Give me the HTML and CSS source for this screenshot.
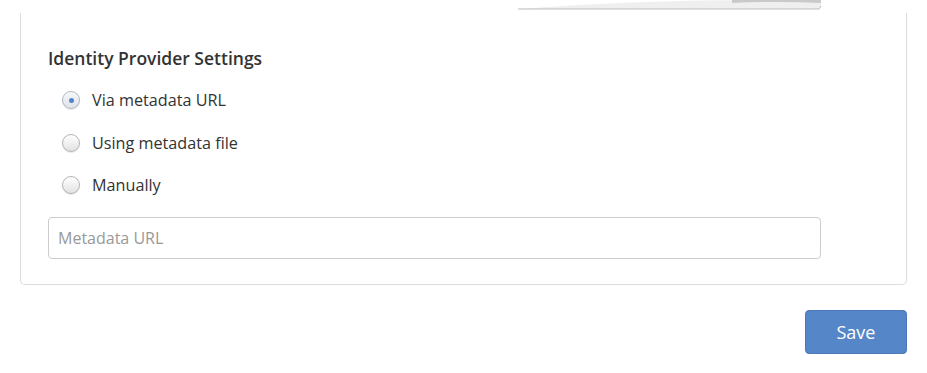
FILE: index.html
```html
<!DOCTYPE html>
<html>
<head>
<meta charset="utf-8">
<link rel="stylesheet" href="styles.css">
</head>
<body>
<div class="page">
  <svg class="strip" width="310" height="10" viewBox="0 0 310 10">
    <path d="M0 9 Q 120 0 240 0 L 303 0 L 303 6 L 301 9 Z" fill="#efefef"/>
    <path d="M214 0 L 303 0 L 303 3 Q 260 1 214 3 Z" fill="#c9c9c9"/>
    <path d="M0 9 L 301 9 L 303 6" fill="none" stroke="#bdbdbd" stroke-width="1"/>
  </svg>
  <section class="card">
    <h2 class="title">Identity Provider Settings</h2>
    <div class="options">
      <label class="option"><span class="radio checked"></span><span class="label">Via metadata URL</span></label>
      <label class="option"><span class="radio"></span><span class="label">Using metadata file</span></label>
      <label class="option"><span class="radio"></span><span class="label">Manually</span></label>
    </div>
    <div class="field"><span class="placeholder">Metadata URL</span></div>
  </section>
  <div class="actions">
    <button class="save">Save</button>
  </div>
</div>
</body>
</html>
```
FILE: styles.css
```css
* { box-sizing: border-box; }
html, body { margin: 0; padding: 0; background: #fff; }
body { font-family: "Open Sans", "Liberation Sans", sans-serif; color: #333; }
.page { position: relative; padding: 13px 20px 0 20px; width: 927px; }
.strip { position: absolute; left: 518px; top: 0; }
.card {
  border: 1px solid #dcdcdc;
  border-top: 0;
  border-radius: 0 0 5px 5px;
  width: 887px;
  padding: 33px 27px 25px 27px;
}
.title { margin: 0; font-size: 17.5px; font-weight: 600; line-height: 24px; color: #333; }
.options { display: flex; flex-direction: column; padding: 9px 0 0 14px; }
.option { display: flex; align-items: center; height: 42.5px; gap: 12px; font-size: 16.2px; color: #333; }
.radio {
  width: 18px; height: 18px; border-radius: 50%;
  border: 1px solid #b3b3b3;
  background: linear-gradient(#ffffff, #e2e2e2);
  box-shadow: inset 0 1px 1px rgba(255,255,255,0.9), 0 1px 1px rgba(0,0,0,0.1);
  display: flex; align-items: center; justify-content: center;
}
.radio.checked { background: linear-gradient(#f4f6f9, #dfe4ea); border-color: #aeb6c0; }
.radio.checked::after { content: ""; width: 5px; height: 5px; border-radius: 50%; background: #4f86c9; }
.field {
  margin-top: 10px;
  width: 773px; height: 42px;
  border: 1px solid #cccccc; border-radius: 4px;
  display: flex; align-items: center; padding: 0 9px;
}
.placeholder { font-size: 16px; color: #999; }
.actions { display: flex; justify-content: flex-end; padding-top: 25px; }
.save {
  width: 102px; height: 44px;
  background: #5586c8; border: 1px solid #4a79b8; border-radius: 4px;
  color: #fff; font-family: "Open Sans", "Liberation Sans", sans-serif; font-size: 18px;
}
```
